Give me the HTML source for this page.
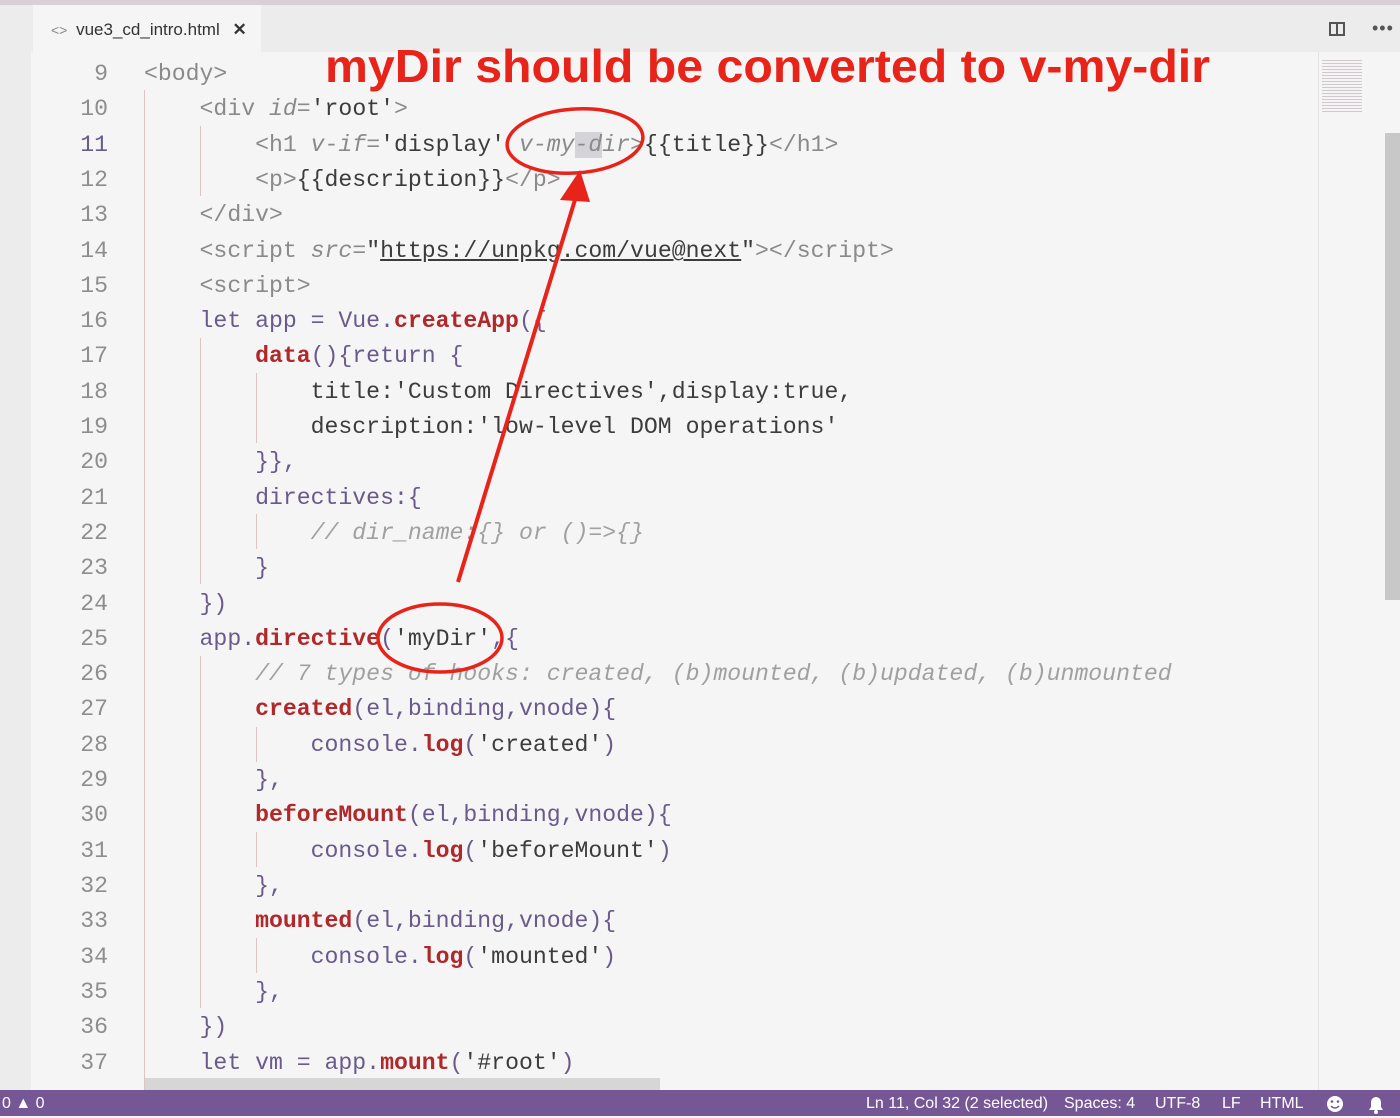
<!DOCTYPE html><html><head><meta charset="utf-8"><style>
body{margin:0;width:1400px;height:1116px;overflow:hidden;background:#f5f5f5;font-family:"Liberation Sans",sans-serif;position:relative}
.top{position:absolute;left:0;top:0;width:1400px;height:5px;background:#d8d0d4}
.act{position:absolute;left:0;top:5px;width:31px;height:1085px;background:#ececec}
.tabs{position:absolute;left:31px;top:5px;width:1369px;height:47px;background:#ececec}
.tab{position:absolute;left:33px;top:5px;width:228px;height:47px;background:#f5f5f5;font-size:17px;color:#333;line-height:50px}
.ln{position:absolute;left:40px;width:68px;text-align:right;font-family:"Liberation Mono",monospace;font-size:23.15px;color:#8e8e8e;height:35px;line-height:35px;margin-top:2px}
.cl{position:absolute;left:144px;font-family:"Liberation Mono",monospace;font-size:23.15px;white-space:pre;color:#3c3c3c;height:35px;line-height:35px;margin-top:2px}
.t{color:#8a8a8a}.a{color:#8a8a8a;font-style:italic}.k{color:#6a5a8c}.m{color:#b0282a;font-weight:bold}.c{color:#a0a0a0;font-style:italic}.s{color:#4a4540}
.g{position:absolute;width:1px;background:#dcc4c4}
.status{position:absolute;left:0;top:1090px;width:1400px;height:26px;background:#765796;color:#fff;font-size:16px;line-height:28px}
</style></head><body>
<div class="top"></div><div class="act"></div><div class="tabs"></div>
<div class="tab"><span style="margin-left:18px;color:#888;font-size:14px">&lt;&gt;</span> <span style="margin-left:4px">vue3_cd_intro.html</span> <span style="margin-left:8px;font-weight:bold">✕</span></div>
<div style="position:absolute;left:1329px;top:22px;width:16px;height:14px;border:2px solid #555;box-sizing:border-box"><div style="position:absolute;left:5px;top:0;width:2px;height:12px;background:#555"></div></div>
<div style="position:absolute;left:1372px;top:18px;font-size:18px;color:#555;letter-spacing:1px">•••</div>
<div style="position:absolute;left:1318px;top:52px;width:1px;height:1038px;background:#e4e4e4"></div>
<div style="position:absolute;left:1385px;top:133px;width:15px;height:467px;background:#c8c8c8"></div>
<div style="position:absolute;left:1322px;top:58px;width:40px;height:55px;background:repeating-linear-gradient(#f5f5f5 0 2px,#cfc8cc 2px 3px)"></div>
<div style="position:absolute;left:144px;top:1078px;width:516px;height:12px;background:#d6d6d6"></div>
<div class="g" style="left:144px;top:90px;height:1000px"></div>
<div class="g" style="left:200px;top:126px;height:70px"></div>
<div class="g" style="left:200px;top:338px;height:246px"></div>
<div class="g" style="left:256px;top:373px;height:70px"></div>
<div class="g" style="left:256px;top:514px;height:35px"></div>
<div class="g" style="left:200px;top:656px;height:352px"></div>
<div class="g" style="left:256px;top:727px;height:35px"></div>
<div class="g" style="left:256px;top:832px;height:35px"></div>
<div class="g" style="left:256px;top:938px;height:35px"></div>

<div class="ln" style="top:55px">9</div><div class="cl" style="top:55px"><span class="t">&lt;body&gt;</span></div>
<div class="ln" style="top:90px">10</div><div class="cl" style="top:90px">    <span class="t">&lt;div </span><span class="a">id</span><span class="t">=</span>'root'<span class="t">&gt;</span></div>
<div class="ln" style="top:126px;color:#6a5a8c">11</div><div class="cl" style="top:126px">        <span class="t">&lt;h1 </span><span class="a">v-if</span><span class="t">=</span>'display'<span class="t"> </span><span class="a">v-my<span style="background:#d4d4d8">-d</span>ir</span><span class="t">&gt;</span>{{title}}<span class="t">&lt;/h1&gt;</span></div>
<div class="ln" style="top:161px">12</div><div class="cl" style="top:161px">        <span class="t">&lt;p&gt;</span>{{description}}<span class="t">&lt;/p&gt;</span></div>
<div class="ln" style="top:196px">13</div><div class="cl" style="top:196px">    <span class="t">&lt;/div&gt;</span></div>
<div class="ln" style="top:232px">14</div><div class="cl" style="top:232px">    <span class="t">&lt;script </span><span class="a">src</span><span class="t">=</span>"<span style="text-decoration:underline">https://unpkg.com/vue@next</span>"<span class="t">&gt;&lt;/script&gt;</span></div>
<div class="ln" style="top:267px">15</div><div class="cl" style="top:267px">    <span class="t">&lt;script&gt;</span></div>
<div class="ln" style="top:302px">16</div><div class="cl" style="top:302px">    <span class="k">let app = Vue.</span><span class="m">createApp</span><span class="k">({</span></div>
<div class="ln" style="top:337px">17</div><div class="cl" style="top:337px">        <span class="m">data</span><span class="k">(){return {</span></div>
<div class="ln" style="top:373px">18</div><div class="cl" style="top:373px">            title:'Custom Directives',display:true,</div>
<div class="ln" style="top:408px">19</div><div class="cl" style="top:408px">            description:'low-level DOM operations'</div>
<div class="ln" style="top:443px">20</div><div class="cl" style="top:443px">        <span class="k">}},</span></div>
<div class="ln" style="top:479px">21</div><div class="cl" style="top:479px">        <span class="k">directives:{</span></div>
<div class="ln" style="top:514px">22</div><div class="cl" style="top:514px">            <span class="c">// dir_name:{} or ()=&gt;{}</span></div>
<div class="ln" style="top:549px">23</div><div class="cl" style="top:549px">        <span class="k">}</span></div>
<div class="ln" style="top:585px">24</div><div class="cl" style="top:585px">    <span class="k">})</span></div>
<div class="ln" style="top:620px">25</div><div class="cl" style="top:620px">    <span class="k">app.</span><span class="m">directive</span><span class="k">(</span>'myDir'<span class="k">,{</span></div>
<div class="ln" style="top:655px">26</div><div class="cl" style="top:655px">        <span class="c">// 7 types of hooks: created, (b)mounted, (b)updated, (b)unmounted</span></div>
<div class="ln" style="top:690px">27</div><div class="cl" style="top:690px">        <span class="m">created</span><span class="k">(el,binding,vnode){</span></div>
<div class="ln" style="top:726px">28</div><div class="cl" style="top:726px">            <span class="k">console.</span><span class="m">log</span><span class="k">(</span>'created'<span class="k">)</span></div>
<div class="ln" style="top:761px">29</div><div class="cl" style="top:761px">        <span class="k">},</span></div>
<div class="ln" style="top:796px">30</div><div class="cl" style="top:796px">        <span class="m">beforeMount</span><span class="k">(el,binding,vnode){</span></div>
<div class="ln" style="top:832px">31</div><div class="cl" style="top:832px">            <span class="k">console.</span><span class="m">log</span><span class="k">(</span>'beforeMount'<span class="k">)</span></div>
<div class="ln" style="top:867px">32</div><div class="cl" style="top:867px">        <span class="k">},</span></div>
<div class="ln" style="top:902px">33</div><div class="cl" style="top:902px">        <span class="m">mounted</span><span class="k">(el,binding,vnode){</span></div>
<div class="ln" style="top:938px">34</div><div class="cl" style="top:938px">            <span class="k">console.</span><span class="m">log</span><span class="k">(</span>'mounted'<span class="k">)</span></div>
<div class="ln" style="top:973px">35</div><div class="cl" style="top:973px">        <span class="k">},</span></div>
<div class="ln" style="top:1008px">36</div><div class="cl" style="top:1008px">    <span class="k">})</span></div>
<div class="ln" style="top:1044px">37</div><div class="cl" style="top:1044px">    <span class="k">let vm = app.</span><span class="m">mount</span><span class="k">(</span>'#root'<span class="k">)</span></div>

<svg style="position:absolute;left:0;top:0" width="1400" height="1090">
<text x="325" y="82" fill="#e8231a" font-family="Liberation Sans" font-weight="bold" font-size="46" textLength="885" lengthAdjust="spacingAndGlyphs">myDir should be converted to v-my-dir</text>
<ellipse cx="575" cy="141" rx="68" ry="32" fill="none" stroke="#e8231a" stroke-width="3.5" transform="rotate(-4 575 141)"/>
<ellipse cx="440" cy="638" rx="62" ry="34" fill="none" stroke="#e8231a" stroke-width="3.5"/>
<line x1="458" y1="582" x2="578" y2="190" stroke="#e8231a" stroke-width="4"/>
<polygon points="580,170 560,200 590,202" fill="#e8231a"/>
</svg>
<div class="status"><span style="margin-left:2px">0 ▲ 0</span>
<span style="position:absolute;left:866px">Ln 11, Col 32 (2 selected)</span>
<span style="position:absolute;left:1064px">Spaces: 4</span>
<span style="position:absolute;left:1155px">UTF-8</span>
<span style="position:absolute;left:1222px">LF</span>
<span style="position:absolute;left:1260px">HTML</span>
<svg style="position:absolute;left:1320px;top:0" width="80" height="26">
<circle cx="15" cy="14" r="8" fill="#fff"/>
<circle cx="12" cy="11.5" r="1.3" fill="#765796"/><circle cx="18" cy="11.5" r="1.3" fill="#765796"/>
<path d="M11 16 q4 4 8 0" stroke="#765796" stroke-width="1.5" fill="none"/>
<path d="M49 20 h14 l-2-3 v-5 a5 5 0 0 0 -10 0 v5 z" fill="#fff"/>
<circle cx="56" cy="22" r="2" fill="#fff"/>
</svg></div>
</body></html>
